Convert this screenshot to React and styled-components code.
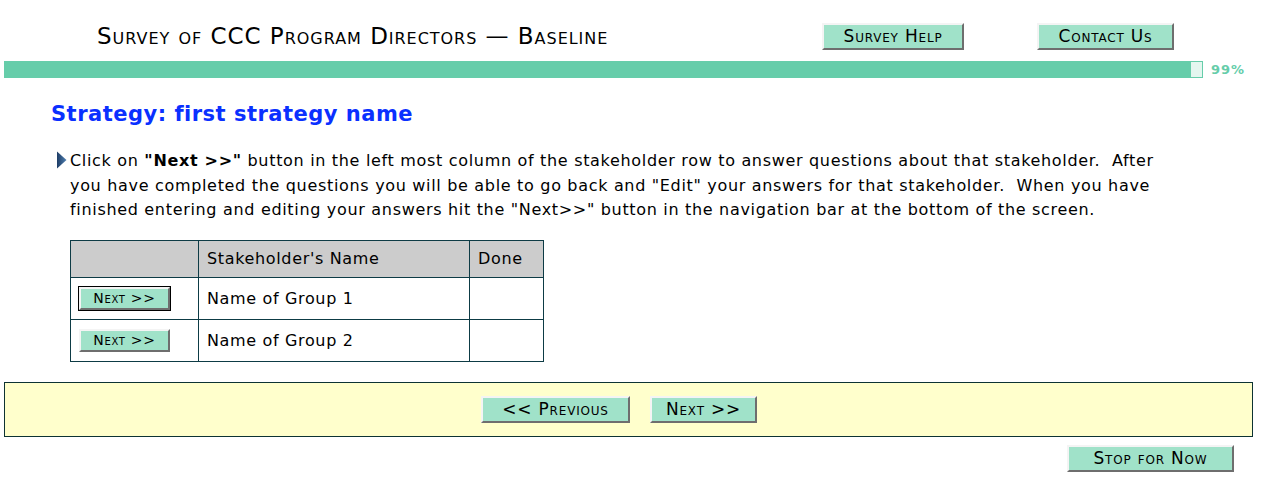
import React from "react";
import styled, { createGlobalStyle, css } from "styled-components";

const Global = createGlobalStyle`
  html, body { margin: 0; padding: 0; background: #fff; }
  body { font-family: "DejaVu Sans", Verdana, sans-serif; color: #000; }
`;

const Page = styled.div`
  width: 1249px;
  padding-left: 4px;
`;

const Header = styled.header`
  display: flex;
  align-items: center;
  height: 28px;
  padding-top: 22px;
`;

const Title = styled.h1`
  flex: 0 0 725px;
  margin: 0;
  padding-left: 93px;
  font-size: 23px;
  font-weight: normal;
  font-variant: small-caps;
  letter-spacing: 0.97px;
  line-height: 28px;
  white-space: nowrap;
`;

const Btn = styled.button`
  font-family: "DejaVu Sans", Verdana, sans-serif;
  font-variant: small-caps;
  font-size: ${(p) => p.$size || 17}px;
  letter-spacing: ${(p) => p.$ls ?? 0.8}px;
  color: #000;
  background: #a0e2c9;
  border-style: solid;
  border-width: 2px;
  border-color: #f4f4f4 #6e6e6e #6e6e6e #f4f4f4;
  padding: 0;
  width: ${(p) => p.$w}px;
  height: ${(p) => p.$h || 27}px;
  line-height: 1;
  white-space: nowrap;
  cursor: pointer;
  ${(p) =>
    p.$focused &&
    css`
      outline: 1px solid #000;
      outline-offset: 0;
    `}
`;

const HeaderButtons = styled.div`
  display: flex;
  gap: 73px;
`;

const ProgressRow = styled.div`
  display: flex;
  align-items: center;
  margin-top: 11px;
  height: 17px;
`;

const Track = styled.div`
  display: flex;
  width: 1199px;
  height: 17px;
`;

const Fill = styled.div`
  background: #66cdaa;
  height: 100%;
`;

const Rest = styled.div`
  flex: 1;
  box-sizing: border-box;
  background: #e4f6ef;
  border: 1px solid #66cdaa;
  border-left: none;
  height: 100%;
`;

const Percent = styled.span`
  margin-left: 8px;
  font-size: 13px;
  letter-spacing: 1px;
  font-weight: bold;
  color: #66cdaa;
`;

const Heading = styled.h2`
  margin: 21px 0 0 47px;
  font-size: 21px;
  letter-spacing: 0.5px;
  font-weight: bold;
  color: #0a30ff;
  line-height: 30px;
`;

const Instruction = styled.div`
  display: flex;
  margin: 20px 0 0 53px;
  font-size: 16px;
  letter-spacing: 0.68px;
  line-height: 24.5px;
  white-space: nowrap;
`;

const Bullet = styled.svg`
  flex: 0 0 auto;
  width: 13px;
  height: 18px;
  margin-top: 2px;
`;

const Text = styled.p`
  margin: 0;
`;

const Table = styled.table`
  margin: 17px 0 0 66px;
  border-collapse: collapse;
  border: 1px solid #0d3b45;
  font-size: 16px;
  letter-spacing: 0.65px;
`;

const Th = styled.th`
  background: #cccccc;
  border: 1px solid #0d3b45;
  font-weight: normal;
  text-align: left;
  height: 37px;
  padding: 0 8px;
  width: ${(p) => p.$w}px;
  box-sizing: border-box;
`;

const Td = styled.td`
  border: 1px solid #0d3b45;
  height: 41px;
  padding: 0 8px;
  vertical-align: middle;
`;

const NavBar = styled.div`
  display: flex;
  justify-content: center;
  align-items: center;
  gap: 20px;
  margin-top: 20px;
  height: 53px;
  background: #ffffcc;
  border: 1px solid #0d3333;
  padding-right: 19px;
`;

const Footer = styled.div`
  display: flex;
  justify-content: flex-end;
  padding: 8px 19px 0 0;
`;

const rows = ["Name of Group 1", "Name of Group 2"];

export default function App() {
  return (
    <Page>
      <Global />
      <Header>
        <Title>Survey of CCC Program Directors — Baseline</Title>
        <HeaderButtons>
          <Btn $w={142}>Survey Help</Btn>
          <Btn $w={137}>Contact Us</Btn>
        </HeaderButtons>
      </Header>
      <ProgressRow>
        <Track>
          <Fill style={{ width: "1187px" }} />
          <Rest />
        </Track>
        <Percent>99%</Percent>
      </ProgressRow>
      <Heading>Strategy: first strategy name</Heading>
      <Instruction>
        <Bullet viewBox="0 0 13 18">
          <defs>
            <linearGradient id="bg" x1="0" y1="0" x2="1" y2="0">
              <stop offset="0" stopColor="#1e3d66" />
              <stop offset="1" stopColor="#4f7fb0" />
            </linearGradient>
          </defs>
          <polygon points="0,0.5 9.5,9 0,17.5" fill="url(#bg)" />
        </Bullet>
        <Text>
          Click on <b>"Next &gt;&gt;"</b> button in the left most column of the stakeholder row to answer questions about that stakeholder.&nbsp; After
          <br />
          you have completed the questions you will be able to go back and "Edit" your answers for that stakeholder.&nbsp; When you have
          <br />
          finished entering and editing your answers hit the "Next&gt;&gt;" button in the navigation bar at the bottom of the screen.
        </Text>
      </Instruction>
      <Table>
        <thead>
          <tr>
            <Th $w={128}></Th>
            <Th $w={271}>Stakeholder's Name</Th>
            <Th $w={74}>Done</Th>
          </tr>
        </thead>
        <tbody>
          {rows.map((r, i) => (
            <tr key={r}>
              <Td>
                <Btn $w={91} $h={23} $size={14} $ls={0.7} $focused={i === 0}>
                  Next &gt;&gt;
                </Btn>
              </Td>
              <Td>{r}</Td>
              <Td></Td>
            </tr>
          ))}
        </tbody>
      </Table>
      <NavBar>
        <Btn $w={149}>&lt;&lt; Previous</Btn>
        <Btn $w={107}>Next &gt;&gt;</Btn>
      </NavBar>
      <Footer>
        <Btn $w={167}>Stop for Now</Btn>
      </Footer>
    </Page>
  );
}
